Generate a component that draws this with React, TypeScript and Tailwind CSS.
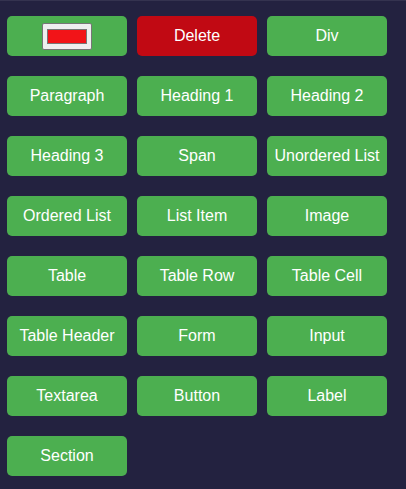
import React, { useState } from "react";

const items = [
	"Div",
	"Paragraph",
	"Heading 1",
	"Heading 2",
	"Heading 3",
	"Span",
	"Unordered List",
	"Ordered List",
	"List Item",
	"Image",
	"Table",
	"Table Row",
	"Table Cell",
	"Table Header",
	"Form",
	"Input",
	"Textarea",
	"Button",
	"Label",
	"Section",
];

export default function App() {
	const [color, setColor] = useState("#f21418");
	return (
		<div className="min-h-[489px] w-full bg-[#232240] border-t border-[#34334f] pl-[7px] pt-[15px] font-['Liberation_Sans',Arial,sans-serif]">
			<div className="grid grid-cols-[120px_120px_120px] gap-x-[10px] gap-y-[20px]">
				<div className="h-10 rounded-[5px] bg-[#4caf50] flex items-center justify-center">
					<input
						type="color"
						value={color}
						onChange={(e) => setColor(e.target.value)}
						className="w-[50px] h-[27px] bg-[#efefef] border border-[#767676] rounded-[2px] px-[2px] py-[1px] cursor-pointer"
					/>
				</div>
				<button className="h-10 rounded-[5px] bg-[#c10913] text-white text-base">
					Delete
				</button>
				{items.map((item) => (
					<button
						key={item}
						className="h-10 rounded-[5px] bg-[#4caf50] text-white text-base"
					>
						{item}
					</button>
				))}
			</div>
		</div>
	);
}
